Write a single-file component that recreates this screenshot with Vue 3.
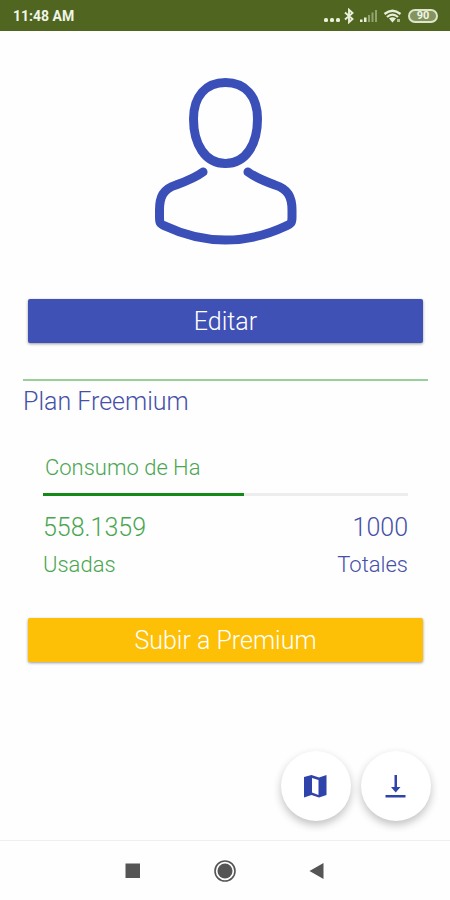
<template>
  <div class="screen">
    <header class="status-bar">
      <span class="clock">11:48 AM</span>
      <div class="status-icons">
        <svg width="18" height="16" viewBox="0 0 18 16" fill="#e9efd9">
          <rect x="1" y="10" width="4" height="4" rx="1.500" />
          <rect x="7" y="10" width="4" height="4" rx="1.500" />
          <rect x="13" y="10" width="4" height="4" rx="1.500" />
        </svg>
        <svg width="12" height="16" viewBox="0 0 12 16" fill="none" stroke="#e9efd9" stroke-width="1.900">
          <path d="M1 4.500 8.500 11 5 14.200V1.800L8.500 5 1 11.500" />
        </svg>
        <svg width="20" height="16" viewBox="0 0 20 16">
          <path d="M1 14v-2.500h2.500V14zM5 14V9.500h2.500V14z" fill="#e9efd9" />
          <path d="M9 14V7h2v7zM12.500 14V4.500h2V14zM16 14V2h2v12z" fill="#93a370" />
        </svg>
        <svg width="23" height="16" viewBox="0 0 23 16">
          <g fill="none" stroke="#e9efd9" stroke-width="2.300">
            <path d="M2.500 6Q10.500 -.5 18.500 6" />
            <path d="M5 9Q10.500 4.300 16 9" />
          </g>
          <path d="M7 10.500Q10.500 8 14 10.500L10.500 14.500z" fill="#e9efd9" />
          <path d="M15 11h3v3h-3z" fill="#b4c196" />
        </svg>
        <span class="battery">90</span>
      </div>
    </header>

    <main class="content">
      <svg class="avatar" width="144" height="170" viewBox="0 0 144 170">
        <path d="M71.500 5.500C91 5.500 103.500 19 103.500 42C103.500 67 92 86.500 71.500 86.500C51 86.500 39.500 67 39.500 42C39.500 19 52 5.500 71.500 5.500Z" />
        <path d="M49 95C41 101 33 104 22 108C9 112 5.500 120 5.500 133V140C5.500 146 6 147 11 149C30 158 50 163 71.500 163C93 163 113 158 132 149C137 147 138 146 138 140V133C138 120 134 112 121 108C110 104 102 101 94 95" />
      </svg>

      <button class="btn btn-edit" type="button">Editar</button>

      <section class="plan">
        <h2 class="plan-title">Plan Freemium</h2>
        <div class="usage">
          <h3 class="usage-title">Consumo de Ha</h3>
          <div class="track" role="progressbar" aria-label="Consumo de Ha" :aria-valuenow="used" :aria-valuemax="total">
            <div class="fill" :style="{ width: percent + '%' }"></div>
          </div>
          <div class="totals">
            <div class="used">
              <div class="amount">{{ used }}</div>
              <div class="caption">Usadas</div>
            </div>
            <div class="total">
              <div class="amount">{{ total }}</div>
              <div class="caption">Totales</div>
            </div>
          </div>
        </div>
      </section>

      <button class="btn btn-premium" type="button">Subir a Premium</button>
    </main>

    <div class="fabs">
      <button class="fab" type="button" aria-label="Mapa">
        <svg width="24" height="24" viewBox="0 0 24 24">
          <path fill="#3043ab" fill-rule="evenodd" d="M0 3 7.500 1 15 3.500 22.500 1V21L15 23.500 7.500 21 0 23.500zM8 4V18.500L14.500 21V6z" />
        </svg>
      </button>
      <button class="fab" type="button" aria-label="Descargar">
        <svg width="24" height="24" viewBox="0 0 24 24" fill="#3043ab">
          <path d="M10.500 1h2.500v12h3.500L11.700 18.500 7 13h3.500z" />
          <path d="M1.500 21h20v2.500h-20z" />
        </svg>
      </button>
    </div>

    <nav class="nav-bar">
      <button type="button" aria-label="Recientes">
        <svg width="24" height="24" viewBox="0 0 24 24"><path d="M4.500 4.500h14.500v14.500H4.500z" fill="#555" /></svg>
      </button>
      <button type="button" aria-label="Inicio">
        <svg width="24" height="24" viewBox="0 0 24 24">
          <circle cx="12" cy="12" r="10" fill="none" stroke="#555" stroke-width="1.600" />
          <circle cx="12" cy="12" r="7.500" fill="#555" />
        </svg>
      </button>
      <button type="button" aria-label="Atrás">
        <svg width="24" height="24" viewBox="0 0 24 24"><path d="M18.500 4v16L4.500 12z" fill="#555" /></svg>
      </button>
    </nav>
  </div>
</template>

<script setup>
import { ref, computed } from 'vue'

const used = ref(558.1359)
const total = ref(1000)

// solo se muestra el porcentaje entero
const percent = computed(() => Math.floor((used.value / total.value) * 100))
</script>

<style>
body {
  margin: 0;
  background: #fefefe;
}
</style>

<style scoped>
.screen {
  display: flex;
  flex-direction: column;
  min-height: 100vh;
  font-family: Roboto, "Liberation Sans", sans-serif;
  font-weight: 300;
}

.status-bar {
  display: flex;
  align-items: center;
  justify-content: space-between;
  height: 31px;
  padding: 0 12px 0 13px;
  background: #506620;
  color: #f1f5e6;
}

.clock {
  font-size: 14px;
  font-weight: 700;
}

.status-icons {
  display: flex;
  align-items: center;
  gap: 3px;
}

.battery {
  box-sizing: border-box;
  width: 30px;
  height: 14px;
  border: 2px solid #dde5ca;
  border-radius: 7px;
  background: #84945f;
  font-size: 11px;
  line-height: 10px;
  font-weight: 700;
  text-align: center;
}

.content {
  flex: 1;
  display: flex;
  flex-direction: column;
  padding: 46px 22px 20px 23px;
}

.avatar {
  align-self: center;
  margin-bottom: 52px;
  fill: none;
  stroke: #3b4fb8;
  stroke-width: 9;
  stroke-linecap: round;
}

.btn {
  height: 44px;
  margin: 0 5px;
  padding: 2px 0 0;
  border: none;
  border-radius: 2px;
  color: #fff;
  font: inherit;
  font-size: 25px;
  line-height: 42px;
  cursor: pointer;
  box-shadow: 0 1px 3px rgba(0, 0, 0, 0.4);
}

.btn-edit {
  background: #3f51b5;
}

.btn-premium {
  background: #fdc006;
}

.plan {
  margin: 36px 0 34px;
  border-top: 2px solid #98cf9a;
}

.plan-title,
.usage-title {
  margin: 0;
  font-weight: 300;
}

.plan-title {
  color: #4650a8;
  font-size: 25px;
  line-height: 42px;
}

.usage {
  margin: 26px 20px 0;
}

.usage-title {
  padding-left: 2px;
  color: #4aa651;
  font-size: 22px;
  line-height: 38px;
}

.track {
  height: 3px;
  margin: 6px 0 14px;
  background: #ededed;
}

.fill {
  height: 100%;
  background: #138a17;
}

.totals {
  display: flex;
  justify-content: space-between;
}

.used {
  color: #4aa651;
}

.total {
  color: #4650a8;
  text-align: right;
}

.amount {
  font-size: 25px;
  line-height: 36px;
}

.caption {
  font-size: 22px;
  line-height: 38px;
}

.fabs {
  display: flex;
  justify-content: flex-end;
  gap: 10px;
  padding: 0 19px 19px;
}

.fab {
  display: grid;
  place-items: center;
  width: 70px;
  height: 70px;
  padding: 0;
  border: none;
  border-radius: 50%;
  background: #fff;
  cursor: pointer;
  box-shadow: 0 4px 9px rgba(0, 0, 0, 0.24);
}

.nav-bar {
  display: flex;
  justify-content: center;
  align-items: center;
  gap: 68px;
  height: 59px;
  border-top: 1px solid #f0f0f0;
}

.nav-bar button {
  display: flex;
  padding: 0;
  border: none;
  background: none;
  cursor: pointer;
}
</style>
